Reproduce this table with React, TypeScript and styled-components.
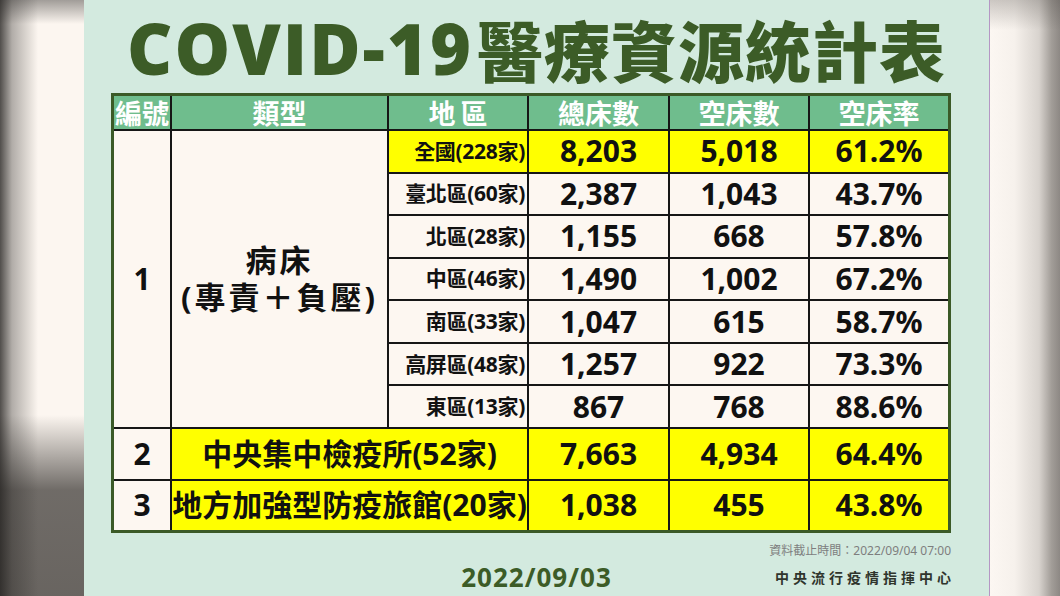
import React from "react";
import styled, { createGlobalStyle } from "styled-components";

const GlobalStyle = createGlobalStyle`
  html, body { margin: 0; padding: 0; }
  body {
    width: 1060px;
    height: 596px;
    overflow: hidden;
    font-family: "Noto Sans", "Noto Sans CJK TC", sans-serif;
  }
`;

const Frame = styled.div`
  display: flex;
  width: 1060px;
  height: 596px;
`;

const LeftEdge = styled.div`
  flex: none;
  width: 84px;
  background:
    linear-gradient(to right, rgba(38, 36, 34, 0.8) 0px, rgba(38, 36, 34, 0.35) 12px, rgba(38, 36, 34, 0) 38px),
    linear-gradient(to bottom, rgba(50, 48, 46, 0.45) 0px, rgba(50, 48, 46, 0) 24px),
    linear-gradient(to bottom, rgba(92, 88, 84, 0) 0px, rgba(92, 88, 84, 0) 415px, rgba(92, 88, 84, 0.88) 490px, rgba(92, 88, 84, 0.92) 596px),
    #fcf6f0;
`;

const RightEdge = styled.div`
  flex: none;
  width: 70px;
  border-left: 1px solid #b497c4;
  background:
    linear-gradient(to bottom, rgba(60, 56, 52, 0.25) 0px, rgba(60, 56, 52, 0) 30px),
    linear-gradient(to right, #fcf7f2 0%, #f6f1ec 35%, #d8d3ce 70%, #a29d98 88%, #8d8884 100%);
`;

const Panel = styled.main`
  flex: none;
  width: 905px;
  background: #d3eadf;
  display: flex;
  flex-direction: column;
`;

const Title = styled.h1`
  margin: 0;
  height: 93px;
  display: flex;
  align-items: center;
  justify-content: center;
  color: #3c5c27;
  font-family: "Open Sans", "Noto Sans CJK TC", sans-serif;
  font-weight: 800;
  white-space: nowrap;
  padding-top: 2px;
  box-sizing: border-box;
`;

const TitleLatin = styled.span`
  font-size: 70px;
  letter-spacing: 2px;
  line-height: 1;
`;

const TitleCjk = styled.span`
  font-family: "Noto Sans CJK TC", sans-serif;
  font-weight: 900;
  font-size: 66px;
  line-height: 1;
  letter-spacing: 1px;
  margin-left: 4px;
`;

const Table = styled.div`
  margin-left: 27px;
  width: 840px;
  box-sizing: border-box;
  display: grid;
  grid-template-columns: 56px 215px 138px 139px 138px 138px;
  grid-template-rows: 33px repeat(7, 40.57px) 50px 49px;
  gap: 2px;
  background: #161616;
  border: 3px solid #3b5a27;
`;

const HeadCell = styled.div<{ $spread?: boolean }>`
  background: #6fbd8d;
  color: #ffffff;
  font-family: "Noto Sans CJK TC", sans-serif;
  font-weight: 700;
  font-size: 27px;
  line-height: 1;
  display: flex;
  align-items: center;
  justify-content: center;
  letter-spacing: ${(p) => (p.$spread ? "5px" : "0")};
  text-indent: ${(p) => (p.$spread ? "5px" : "0")};
  white-space: nowrap;
`;

const Cell = styled.div<{ $yellow?: boolean; $rows?: number; $cols?: number }>`
  background: ${(p) => (p.$yellow ? "#ffff00" : "#fdf7f1")};
  color: #111111;
  font-weight: 700;
  display: flex;
  align-items: center;
  justify-content: center;
  white-space: nowrap;
  grid-row: ${(p) => (p.$rows ? `span ${p.$rows}` : "auto")};
  grid-column: ${(p) => (p.$cols ? `span ${p.$cols}` : "auto")};
`;

const NumCell = styled(Cell)`
  font-size: 30px;
  line-height: 1;
`;

const RegionCell = styled(Cell)`
  justify-content: flex-end;
  padding-right: 2px;
  font-size: 21px;
  line-height: 1;
  letter-spacing: -0.3px;
`;

const TypeCell = styled(Cell)`
  flex-direction: column;
  font-size: 31px;
  line-height: 37px;
  letter-spacing: 3px;
`;

const WideCell = styled(Cell)`
  font-size: 30px;
  line-height: 1;
`;

const Note = styled.div`
  width: 840px;
  margin-left: 27px;
  margin-top: 10px;
  text-align: right;
  font-size: 12px;
  line-height: 16px;
  color: #7e7e7e;
  font-family: "Noto Sans", "Noto Sans CJK TC", sans-serif;
`;

const Bottom = styled.div`
  display: grid;
  grid-template-columns: 1fr auto 1fr;
  align-items: center;
  margin-top: 5px;
`;

const DateText = styled.div`
  grid-column: 2;
  color: #3c5c27;
  font-weight: 700;
  font-size: 26px;
  line-height: 26px;
  letter-spacing: 1px;
`;

const Org = styled.div`
  grid-column: 3;
  justify-self: end;
  margin-right: 34px;
  font-family: "Noto Sans CJK TC", sans-serif;
  font-weight: 700;
  font-size: 14px;
  line-height: 20px;
  letter-spacing: 4px;
  color: #2f352d;
`;

const regions = [
  { name: "全國(228家)", total: "8,203", empty: "5,018", rate: "61.2%", yellow: true },
  { name: "臺北區(60家)", total: "2,387", empty: "1,043", rate: "43.7%" },
  { name: "北區(28家)", total: "1,155", empty: "668", rate: "57.8%" },
  { name: "中區(46家)", total: "1,490", empty: "1,002", rate: "67.2%" },
  { name: "南區(33家)", total: "1,047", empty: "615", rate: "58.7%" },
  { name: "高屏區(48家)", total: "1,257", empty: "922", rate: "73.3%" },
  { name: "東區(13家)", total: "867", empty: "768", rate: "88.6%" },
];

const others = [
  { no: "2", name: "中央集中檢疫所(52家)", total: "7,663", empty: "4,934", rate: "64.4%" },
  { no: "3", name: "地方加強型防疫旅館(20家)", total: "1,038", empty: "455", rate: "43.8%" },
];

export default function App() {
  return (
    <>
      <GlobalStyle />
      <Frame>
        <LeftEdge />
        <Panel>
          <Title>
            <TitleLatin>COVID-19</TitleLatin>
            <TitleCjk>醫療資源統計表</TitleCjk>
          </Title>
          <Table>
            <HeadCell>編號</HeadCell>
            <HeadCell>類型</HeadCell>
            <HeadCell $spread>地區</HeadCell>
            <HeadCell>總床數</HeadCell>
            <HeadCell>空床數</HeadCell>
            <HeadCell>空床率</HeadCell>

            <NumCell $rows={7}>1</NumCell>
            <TypeCell $rows={7}>
              <span>病床</span>
              <span>(專責＋負壓)</span>
            </TypeCell>
            {regions.map((r) => (
              <React.Fragment key={r.name}>
                <RegionCell $yellow={r.yellow}>{r.name}</RegionCell>
                <NumCell $yellow={r.yellow}>{r.total}</NumCell>
                <NumCell $yellow={r.yellow}>{r.empty}</NumCell>
                <NumCell $yellow={r.yellow}>{r.rate}</NumCell>
              </React.Fragment>
            ))}
            {others.map((o) => (
              <React.Fragment key={o.no}>
                <NumCell>{o.no}</NumCell>
                <WideCell $yellow $cols={2}>{o.name}</WideCell>
                <NumCell $yellow>{o.total}</NumCell>
                <NumCell $yellow>{o.empty}</NumCell>
                <NumCell $yellow>{o.rate}</NumCell>
              </React.Fragment>
            ))}
          </Table>
          <Note>資料截止時間：2022/09/04 07:00</Note>
          <Bottom>
            <DateText>2022/09/03</DateText>
            <Org>中央流行疫情指揮中心</Org>
          </Bottom>
        </Panel>
        <RightEdge />
      </Frame>
    </>
  );
}
